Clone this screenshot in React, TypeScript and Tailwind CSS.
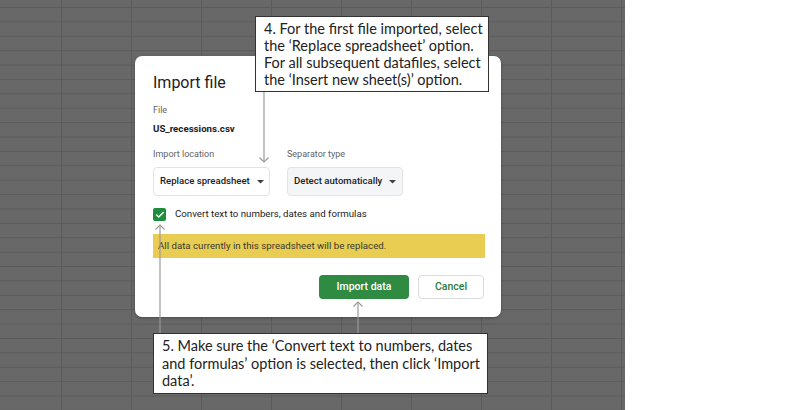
import { Check } from "lucide-react";

const Caret = () => (
  <svg width="7" height="4" viewBox="0 0 7 4" className="ml-[7px] shrink-0">
    <path d="M0 0 L7 0 L3.5 3.5 Z" fill="#3c4043" />
  </svg>
);

const Arrows = () => (
  <svg className="pointer-events-none absolute inset-0" width="810" height="410" viewBox="0 0 810 410">
    <g stroke="#9a9a9a" strokeWidth="1.2" fill="none">
      <path d="M264 92 V162" />
      <path d="M259.5 157.5 L264 162 L268.5 157.5" />
      <path d="M160 333 V225" />
      <path d="M155.5 229.5 L160 225 L164.5 229.5" />
      <path d="M358 333 V302" />
      <path d="M353.5 306.5 L358 302 L362.5 306.5" />
    </g>
  </svg>
);

export default function App() {
  return (
    <div className="relative h-[410px] w-[810px] overflow-hidden bg-white font-['Roboto',sans-serif]">
      <div className="h-full w-[625px] bg-[#686868] bg-[linear-gradient(to_right,#5b5b5b_1px,transparent_1px),linear-gradient(to_bottom,#5b5b5b_1px,transparent_1px)] bg-[size:70px_14.4px] bg-[position:61px_7px]" />

      <div className="absolute left-[135px] top-[56px] flex h-[261px] w-[366px] flex-col rounded-[7px] bg-white pl-[18px] pr-[16px] pt-[17px] shadow-[0_1px_3px_rgba(0,0,0,0.3)]">
        <h2 className="text-[16px] leading-[20px] text-[#202124]">Import file</h2>
        <div className="mt-[11px] text-[9px] leading-[12px] text-[#5f6368]">File</div>
        <div className="mt-[6px] text-[9.7px] font-bold leading-[14px] text-[#202124]">US_recessions.csv</div>

        <div className="mt-[12px] flex gap-[17px]">
          <div className="flex w-[117px] flex-col">
            <div className="text-[9px] leading-[12px] text-[#5f6368]">Import location</div>
            <div className="mt-[7px] flex h-[29px] items-center whitespace-nowrap rounded-[4px] border border-[#e3e3e3] bg-white pl-[6px] text-[9.6px] font-medium text-[#202124]">
              Replace spreadsheet
              <Caret />
            </div>
          </div>
          <div className="flex w-[116px] flex-col">
            <div className="text-[9px] leading-[12px] text-[#5f6368]">Separator type</div>
            <div className="mt-[7px] flex h-[29px] items-center whitespace-nowrap rounded-[4px] border border-[#e3e3e3] bg-[#f4f5f6] pl-[6px] text-[9.6px] font-medium text-[#202124]">
              Detect automatically
              <Caret />
            </div>
          </div>
        </div>

        <div className="mt-[12px] flex h-[13px] items-center gap-[9px]">
          <div className="flex h-[13px] w-[13px] items-center justify-center rounded-[2px] bg-[#1e8e3e]">
            <Check className="h-[10px] w-[10px] text-white" strokeWidth={3.5} />
          </div>
          <span className="text-[9.7px] text-[#202124]">Convert text to numbers, dates and formulas</span>
        </div>

        <div className="mt-[13px] flex h-[24px] items-center bg-[#e8cd52] pl-[5px] text-[9.7px] text-[#3c3a2e]">
          All data currently in this spreadsheet will be replaced.
        </div>

        <div className="mt-[17px] flex justify-end gap-[9px] pr-[1px]">
          <button className="h-[24px] w-[90px] rounded-[4px] bg-[#2f8b41] text-[10.5px] font-medium text-white">
            Import data
          </button>
          <button className="h-[24px] w-[66px] rounded-[4px] border border-[#dadce0] bg-white text-[10.5px] font-medium text-[#2b7a3b]">
            Cancel
          </button>
        </div>
      </div>

      <div className="absolute left-[255px] top-[16px] h-[76px] w-[234px] border border-[#333] bg-white pl-[8px] pr-[4px] pt-[3px] font-['Lato',sans-serif] text-[14.5px] leading-[17px] text-[#222]">
        4. For the first file imported, select the ‘Replace spreadsheet’ option. For all subsequent datafiles, select the ‘Insert new sheet(s)’ option.
      </div>

      <div className="absolute left-[153px] top-[333px] h-[61px] w-[335px] border border-[#333] bg-white pl-[8px] pr-[4px] pt-[3px] font-['Lato',sans-serif] text-[14.5px] leading-[17.5px] text-[#222]">
        5. Make sure the ‘Convert text to numbers, dates and formulas’ option is selected, then click ‘Import data’.
      </div>

      <Arrows />
    </div>
  );
}
